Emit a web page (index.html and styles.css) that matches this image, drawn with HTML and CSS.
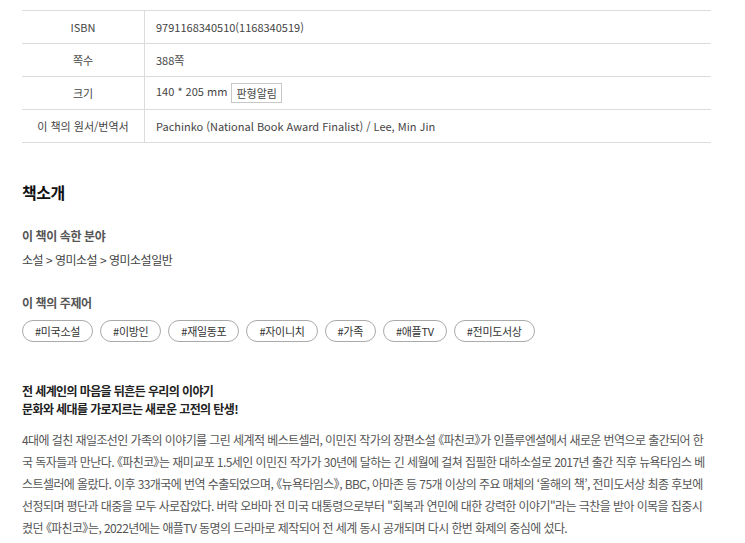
FILE: index.html
```html
<!DOCTYPE html>
<html lang="ko">
<head>
    <meta charset="UTF-8">
    <meta name="viewport" content="width=device-width, initial-scale=1.0">
    <title>책소개</title>
    <link rel="stylesheet" href="styles.css">
</head>
<body>
    <div class="wrap">
        <table class="info-table">
            <tr>
                <th>ISBN</th>
                <td>9791168340510(1168340519)</td>
            </tr>
            <tr>
                <th>쪽수</th>
                <td>388쪽</td>
            </tr>
            <tr>
                <th>크기</th>
                <td>140 * 205 mm <span class="size-btn">판형알림</span></td>
            </tr>
            <tr>
                <th>이 책의 원서/번역서</th>
                <td>Pachinko (National Book Award Finalist) / Lee, Min Jin</td>
            </tr>
        </table>

        <h2 class="section-title">책소개</h2>

        <div class="block">
            <h3 class="block-title">이 책이 속한 분야</h3>
            <p class="category">소설 &gt; 영미소설 &gt; 영미소설일반</p>
        </div>

        <div class="block">
            <h3 class="block-title">이 책의 주제어</h3>
            <div class="tags">
                <span class="tag">#미국소설</span>
                <span class="tag">#이방인</span>
                <span class="tag">#재일동포</span>
                <span class="tag">#자이니치</span>
                <span class="tag">#가족</span>
                <span class="tag">#애플TV</span>
                <span class="tag">#전미도서상</span>
            </div>
        </div>

        <div class="intro">
            <p class="intro-head">전 세계인의 마음을 뒤흔든 우리의 이야기<br>문화와 세대를 가로지르는 새로운 고전의 탄생!</p>
            <p class="intro-body">4대에 걸친 재일조선인 가족의 이야기를 그린 세계적 베스트셀러, 이민진 작가의 장편소설 《파친코》가 인플루엔셜에서 새로운 번역으로 출간되어 한국 독자들과 만난다. 《파친코》는 재미교포 1.5세인 이민진 작가가 30년에 달하는 긴 세월에 걸쳐 집필한 대하소설로 2017년 출간 직후 뉴욕타임스 베스트셀러에 올랐다. 이후 33개국에 번역 수출되었으며, 《뉴욕타임스》, BBC, 아마존 등 75개 이상의 주요 매체의 ‘올해의 책’, 전미도서상 최종 후보에 선정되며 평단과 대중을 모두 사로잡았다. 버락 오바마 전 미국 대통령으로부터 "회복과 연민에 대한 강력한 이야기"라는 극찬을 받아 이목을 집중시켰던 《파친코》는, 2022년에는 애플TV 동명의 드라마로 제작되어 전 세계 동시 공개되며 다시 한번 화제의 중심에 섰다.</p>
        </div>
    </div>
</body>
</html>
```
FILE: styles.css
```css
body {
    margin: 0;
    padding: 0;
    background: #fff;
    font-family: "Noto Sans CJK KR", "Noto Sans", sans-serif;
    color: #333;
}

.wrap {
    width: 689px;
    margin-left: 22px;
    padding-top: 10px;
}

.info-table {
    width: 100%;
    border-collapse: collapse;
    border-top: 1px solid #dcdcdc;
    font-size: 11px;
}

.info-table th,
.info-table td {
    height: 32px;
    padding: 0;
    border-bottom: 1px solid #dcdcdc;
    font-weight: normal;
    color: #444;
}

.info-table th {
    width: 122px;
    text-align: center;
    border-right: 1px solid #dcdcdc;
}

.info-table td {
    padding-left: 11px;
}

.size-btn {
    display: inline-block;
    margin-left: 1px;
    padding: 0 4px;
    height: 18px;
    line-height: 18px;
    border: 1px solid #c8c8c8;
    font-size: 11px;
    color: #444;
    vertical-align: middle;
}

.section-title {
    margin: 39px 0 0;
    font-size: 16px;
    font-weight: bold;
    line-height: 20px;
    letter-spacing: -0.5px;
    color: #111;
}

.block {
    margin-top: 26px;
}

.block + .block {
    margin-top: 27px;
}

.block-title {
    margin: 0;
    font-size: 12px;
    font-weight: bold;
    line-height: 16px;
    letter-spacing: -0.4px;
    color: #555;
}

.category {
    margin: 8px 0 0;
    font-size: 12px;
    line-height: 16px;
    letter-spacing: -0.5px;
    color: #444;
}

.tags {
    display: flex;
    flex-wrap: wrap;
    gap: 7px;
    margin-top: 9px;
}

.tag {
    display: inline-block;
    height: 20px;
    line-height: 20px;
    padding: 0 12px;
    border: 1px solid #aaa;
    border-radius: 11px;
    font-size: 11px;
    letter-spacing: -0.3px;
    color: #333;
}

.intro {
    margin-top: 40px;
}

.intro-head {
    margin: 0;
    font-size: 12px;
    font-weight: bold;
    line-height: 18px;
    letter-spacing: -0.6px;
    color: #222;
}

.intro-body {
    margin: 11px 0 0;
    font-size: 12px;
    line-height: 22px;
    letter-spacing: -0.58px;
    font-feature-settings: "palt";
    color: #555;
}
```
